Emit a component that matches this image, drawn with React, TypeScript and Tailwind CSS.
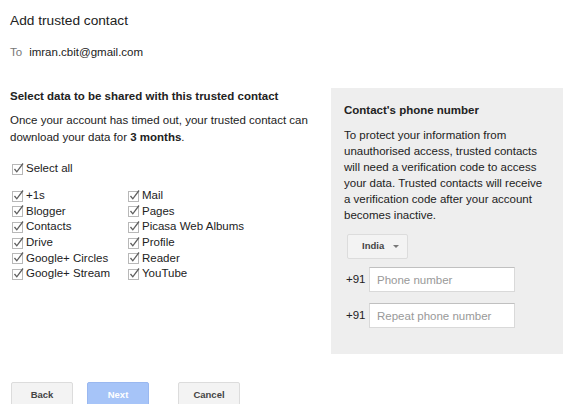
const items: [string, string][] = [
  ["+1s", "Mail"],
  ["Blogger", "Pages"],
  ["Contacts", "Picasa Web Albums"],
  ["Drive", "Profile"],
  ["Google+ Circles", "Reader"],
  ["Google+ Stream", "YouTube"],
];

function Check() {
  return (
    <svg width="14" height="14" viewBox="0 0 14 14" className="shrink-0">
      <rect x="1.5" y="2.5" width="10" height="10" fill="#fff" stroke="#b8b8b8" />
      <path d="M3.5 7 L5.8 9.8 L12 1.5" fill="none" stroke="#5f5f5f" strokeWidth="1.3" />
    </svg>
  );
}

function CheckRow({ label, h }: { label: string; h: string }) {
  return (
    <div className={`flex items-center gap-[1px] whitespace-nowrap ${h}`}>
      <Check />
      <span>{label}</span>
    </div>
  );
}

function Button({ label, primary }: { label: string; primary?: boolean }) {
  return (
    <button
      className={`w-[62px] h-[27px] rounded-[2px] border text-[9.5px] font-bold ${
        primary
          ? "bg-[#a6c4f8] border-[#9ab8f0] text-white"
          : "bg-[#f3f3f3] border-[#dcdcdc] text-[#444]"
      }`}
    >
      {label}
    </button>
  );
}

export default function App() {
  return (
    <div className="w-[564px] h-[404px] overflow-hidden bg-white text-[11.5px] text-[#222] font-['Liberation_Sans',Arial,sans-serif]">
      <div className="pt-[11px] pl-[10px] text-[13.7px] leading-[19px]">Add trusted contact</div>
      <div className="mt-[14px] pl-[10px] leading-[16px]">
        <span className="text-[#777]">To</span>
        <span className="ml-[7px]">imran.cbit@gmail.com</span>
      </div>

      <div className="mt-[28px] flex">
        <div className="w-[331px] pl-[10px]">
          <div className="font-bold leading-[16px]">Select data to be shared with this trusted contact</div>
          <p className="mt-[8px] leading-[17px] whitespace-nowrap">
            Once your account has timed out, your trusted contact can
            <br />
            download your data for <b>3 months</b>.
          </p>
          <div className="mt-[15px] pl-[1px]">
            <CheckRow label="Select all" h="h-[16px]" />
          </div>
          <div className="mt-[11px] pl-[1px] grid grid-cols-[116px_1fr]">
            {items.map(([a, b]) => (
              <div key={a} className="contents">
                <CheckRow label={a} h="h-[15.6px]" />
                <CheckRow label={b} h="h-[15.6px]" />
              </div>
            ))}
          </div>
        </div>

        <div className="w-[232px] h-[266px] bg-[#eeeeee] px-[13px] pt-[14px]">
          <div className="font-bold leading-[16px]">Contact's phone number</div>
          <p className="mt-[9px] leading-[16px] whitespace-nowrap">
            To protect your information from
            <br />
            unauthorised access, trusted contacts
            <br />
            will need a verification code to access
            <br />
            your data. Trusted contacts will receive
            <br />
            a verification code after your account
            <br />
            becomes inactive.
          </p>
          <div className="mt-[11px] ml-[3px] w-[61px] h-[25px] rounded-[2px] border border-[#dcdcdc] bg-[#f3f3f3] flex items-center pl-[14px] gap-[9px] text-[9.5px] font-bold text-[#444]">
            <span>India</span>
            <svg width="6" height="3" viewBox="0 0 6 3">
              <path d="M0 0 L6 0 L3 3 Z" fill="#777" />
            </svg>
          </div>
          <div className="mt-[8px] flex items-center">
            <span className="w-[25px] pl-[2px]">+91</span>
            <input
              placeholder="Phone number"
              className="w-[146px] h-[25px] bg-white border border-[#d9d9d9] border-t-[#c0c0c0] px-[7px] text-[11.5px] placeholder:text-[#999] outline-none"
            />
          </div>
          <div className="mt-[11px] flex items-center">
            <span className="w-[25px] pl-[2px]">+91</span>
            <input
              placeholder="Repeat phone number"
              className="w-[146px] h-[25px] bg-white border border-[#d9d9d9] border-t-[#c0c0c0] px-[7px] text-[11.5px] placeholder:text-[#999] outline-none"
            />
          </div>
        </div>
      </div>

      <div className="mt-[28px] pl-[11px] flex">
        <Button label="Back" />
        <div className="ml-[14px]">
          <Button label="Next" primary />
        </div>
        <div className="ml-[29px]">
          <Button label="Cancel" />
        </div>
      </div>
    </div>
  );
}
